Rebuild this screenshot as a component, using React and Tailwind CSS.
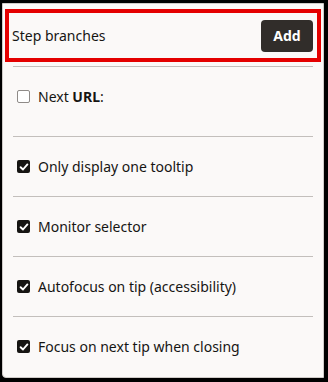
import React from "react";

const items = [
  { id: "only", label: "Only display one tooltip", checked: true },
  { id: "monitor", label: "Monitor selector", checked: true },
  { id: "autofocus", label: "Autofocus on tip (accessibility)", checked: true },
  { id: "focusnext", label: "Focus on next tip when closing", checked: true },
];

const Box = ({ checked }) =>
  checked ? (
    <span className="flex h-[13px] w-[13px] shrink-0 items-center justify-center rounded-[2px] bg-[#161513]">
      <svg width="10" height="10" viewBox="0 0 10 10">
        <path d="M1.6 5.2 L4 7.5 L8.4 2.4" fill="none" stroke="#fff" strokeWidth="1.9" strokeLinecap="round" strokeLinejoin="round" />
      </svg>
    </span>
  ) : (
    <span className="h-[13px] w-[13px] shrink-0 rounded-[2px] border border-[#8f8b88] bg-white" />
  );

const Row = ({ checked, children, className = "" }) => (
  <div className={`flex items-center gap-[8px] pl-[14px] ${className}`}>
    <Box checked={checked} />
    <span className="text-[14px] text-[#161513]">{children}</span>
  </div>
);

const App = () => {
  return (
    <div
      className="h-[382px] w-[328px] bg-black pb-[4px] pl-[2px] pr-[4px] pt-[3px]"
      style={{ fontFamily: '"Noto Sans", "Open Sans", sans-serif' }}
    >
      <div className="flex h-full flex-col rounded-bl-[4px] border border-[#cfcbc8] bg-[#fbf9f8]">
        <div className="mx-[2px] mt-[5px] flex h-[53px] items-center justify-between border-4 border-[#e40000] pl-[3px] pr-[4px]">
          <span className="text-[14px] text-[#161513]">Step branches</span>
          <button className="h-[32px] w-[52px] rounded-[4px] bg-[#312d2a] text-[14px] font-bold text-white">
            Add
          </button>
        </div>

        <div className="mx-[10px] mt-[4px] border-t border-[#c3bfbc]" />
        <Row checked={false} className="h-[69px] pb-[10px]">
          Next <b className="font-bold">URL</b>:
        </Row>

        {items.map((item) => (
          <React.Fragment key={item.id}>
            <div className="mx-[10px] border-t border-[#c3bfbc]" />
            <Row checked={item.checked} className="h-[59px]">
              {item.label}
            </Row>
          </React.Fragment>
        ))}
      </div>
    </div>
  );
};

export default App;
